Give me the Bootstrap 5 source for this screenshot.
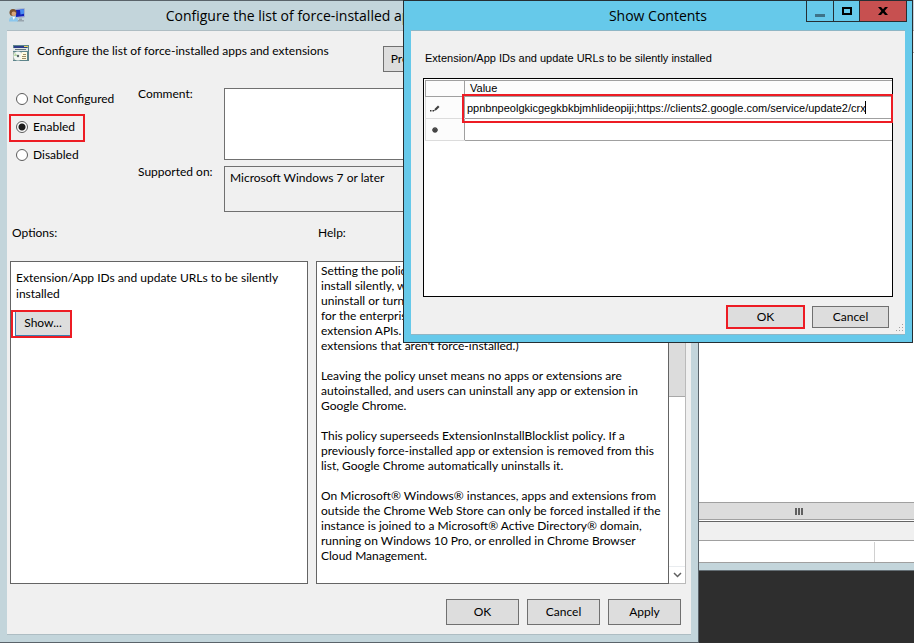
<!DOCTYPE html>
<html lang="en">
<head>
<meta charset="utf-8">
<meta name="viewport" content="width=device-width, initial-scale=1">
<title>Configure the list of force-installed apps and extensions</title>
<link href="https://cdn.jsdelivr.net/npm/bootstrap@5.3.0/dist/css/bootstrap.min.css" rel="stylesheet">
<style>
  :root { --frame: #c3d5db; --face: #f0f0f0; --edge: #707070; --mark: #ed1c24; }
  body { font-family: Lato, "Open Sans", sans-serif; font-size: 12px; line-height: 15px; color: #000; background: #2e2e2e; }
  .desktop { min-height: 100vh; }
  .policy-window { background: var(--frame); border: solid #5a636a; border-width: 1px 1px 1px 0; padding: 0 7px 7px; min-width: 0; }
  .caption { height: 29px; font-family: "Open Sans", sans-serif; font-size: 14px; line-height: 29px; }
  .policy-window .caption { padding-right: 4px; }
  .caption-icon { left: 2px; top: 7px; }
  .client { background: var(--face); border-top: 1px solid #aebdc3; border-bottom: 1px solid #aebdc3; }
  .policy-window .client { padding: 14px 5px 9px 3px; }
  .policy-head { height: 41px; padding-left: 3px; gap: 8px; }
  .policy-head .title-text { margin-top: -2px; }
  .policy-head .prev { width: 110px; margin-left: 46px; margin-top: 1px; padding-left: 7px; text-align: left; }
  .win-btn { --bs-btn-padding-x: 0; --bs-btn-padding-y: 0; --bs-btn-font-size: 12px; --bs-btn-line-height: 15px; --bs-btn-border-radius: 0; --bs-btn-bg: #dddddd; --bs-btn-color: #000; --bs-btn-border-color: #707070; --bs-btn-hover-bg: #e5f1fb; --bs-btn-hover-color: #000; --bs-btn-hover-border-color: #3c7fb1; width: 73px; height: 26px; padding-bottom: 2px; }
  .settings-grid { display: grid; grid-template-columns: 122px 86px 1fr; padding-left: 6px; height: 139px; }
  .choice { height: 28px; margin-left: -7px; padding: 3px 0 6px 7px; gap: 5px; }
  .choice input { appearance: none; width: 12px; height: 12px; margin: 0; border: 1px solid #5c5c5c; border-radius: 50%; background: #fff; }
  .choice input:checked { background: radial-gradient(circle, #1c1c1c 0 3px, #fff 4px); }
  .choice.marked { width: 76px; outline: 2px solid var(--mark); outline-offset: -2px; }
  .field-labels { gap: 63px; }
  .fields { padding-top: 2px; gap: 6px; }
  .field-box { border: 1px solid var(--edge); border-radius: 0; resize: none; padding: 3px 5px; }
  .comment-box { height: 72px; background: #fff; }
  .support-box { height: 46px; background: var(--face); }
  .panels { display: grid; grid-template-columns: 298fr 370fr; column-gap: 8px; row-gap: 21px; }
  .panel-name { padding-left: 2px; }
  .options-panel { background: #fff; border: 1px solid #646464; padding: 8px 5px; line-height: 16px; }
  .show-mark { width: 61px; height: 28px; margin: 8px 0 0 -5px; border: 2px solid var(--mark); padding-left: 2px; background: #fff; }
  .show-mark .win-btn { width: 100%; height: 100%; --bs-btn-border-color: #3c7fb1; border-width: 0 0 1px 1px; }
  .help-text { background: #fff; border: 1px solid #646464; padding: 1px 4px 18px; white-space: pre-line; height: 323px; overflow: hidden; }
  .track { width: 17px; border: solid #bababa; border-width: 1px 1px 1px 0; background: #fff; }
  .thumb { height: 118px; background: #dcdcdc; border-bottom: 1px solid #a8a8a8; }
  .arrow { height: 17px; line-height: 0; }
  .dialog-footer { gap: 8px; padding: 15px 5px 0 0; }
  /* console window behind the editor */
  .console { width: 215px; }
  .console-title { height: 31px; background: #c9d3de; border-bottom: 1px solid #aaa; }
  .console-menu { height: 22px; background: var(--face); border-bottom: 1px solid #aaa; }
  .console-scroll { height: 18px; background: #dcdcdc; border: solid #a0a0a0; border-width: 1px 0; gap: 1px; }
  .console-scroll i { width: 2px; height: 7px; background: #606060; }
  .console-tabs { height: 20px; margin-top: 1px; background: var(--face); border: solid #a0a0a0; border-width: 1px 0; border-top-color: #646464; }
  .console-status { height: 22px; border-bottom: 1px solid #a0a0a0; background: #fff; }
  .console-status i { width: 1px; height: 20px; margin: 1px 39px 0 auto; background: #d0d0d0; }
  .console-edge { height: 8px; background: var(--frame); border-bottom: 1px solid #646e74; }
  .wallpaper { height: 72px; background: #2e2e2e; }
  /* dialog on top */
  .contents-window { left: 403px; right: 1px; top: 0; background: #66c9ea; border: 1px solid #252e33; padding: 0 7px 7px; z-index: 5; }
  .contents-window .client { padding: 19px 12px 6px; border-color: #8fb6c5; font-family: "Liberation Sans", sans-serif; font-size: 11px; line-height: 16px; }
  .window-tools { right: -2px; top: 0; height: 21px; border: solid #252e33; border-width: 0 1px 1px; }
  .window-tools button { width: 27px; padding: 0; border: 0; border-right: 1px solid #252e33; background: transparent; line-height: 0; }
  .window-tools .max-tool { width: 26px; }
  .window-tools .close-tool { width: 46px; background: #c75050; border-right: 0; }
  .sheet-label { padding-left: 2px; }
  .value-sheet { height: 219px; margin-top: 12px; border: 1px solid #000; background: #fff; padding: 1px 0 0 1px; }
  .value-sheet table { width: 100%; table-layout: fixed; border-collapse: collapse; }
  .value-sheet th, .value-sheet td { border: 1px solid #a0a0a0; padding: 0; font-weight: 400; height: 22px; }
  .value-sheet tr > :last-child { border-right: 0; }
  .value-sheet thead th { height: 16px; line-height: 15px; padding-left: 5px; background: #fcfcfc; }
  .value-sheet tbody th { background: #fcfcfc; border-color: #dcdcdc #a0a0a0 #dcdcdc #dcdcdc; line-height: 0; padding-left: 3px; }
  .value-sheet col:first-child { width: 39px; }
  .cell-input { width: 398px; border: 0; padding: 0 0 0 2px; height: 18px; background: transparent; outline: 0; }
  .cell-input.active { width: 400px; }
  .caret { width: 1px; height: 13px; background: #000; }
  .cell-mark { inset: -3px -1px -5px -3px; border: 2px solid var(--mark); z-index: 2; }
  .contents-footer { margin-top: 9px; gap: 8px; padding-right: 4px; }
  .contents-footer .win-btn { width: 77px; height: 22px; font-family: Lato, sans-serif; }
  .contents-footer .marked { outline: 2px solid var(--mark); outline-offset: -1px; }
  .grip { right: 1px; bottom: 1px; }
</style>
<script src="https://cdn.jsdelivr.net/npm/bootstrap@5.3.0/dist/js/bootstrap.bundle.min.js"></script>
</head>
<body>
<div class="desktop d-flex position-relative overflow-hidden">
  <main class="policy-window flex-grow-1 d-flex flex-column">
    <header class="caption position-relative text-center text-nowrap">
      <svg class="caption-icon position-absolute" width="17" height="16" viewBox="0 0 17 16" aria-hidden="true">
        <path d="M5.500 1.500l10-1v8.500l-9 1z" fill="#d7e1ed" stroke="#a3b1ca"/><path d="M6.500 2l8.500-.8v7l-8 .9z" fill="#1624b8"/><path d="M11 1.600l4-.4v4.500l-3.500.8z" fill="#4a8cf0"/>
        <path d="M10 10.500h3v1.500h2v1.500H8V12h2z" fill="#98a4ad"/>
        <circle cx="4" cy="4.500" r="3.500" fill="#7c5230"/><circle cx="4.800" cy="5.800" r="2.300" fill="#d9a77c"/>
        <path d="M0 13.500c0-4 2-5 4.500-5S9 9.500 9 13.500z" fill="#8cc7ed"/><path d="M3.500 9l1.300 3L6 9z" fill="#fff"/>
      </svg>
      Configure the list of force-installed apps and extensions
    </header>
    <div class="client flex-grow-1 d-flex flex-column">
      <div class="policy-head d-flex align-items-start">
        <svg width="16" height="16" viewBox="0 0 16 16" aria-hidden="true">
          <path d="M0 0h16v16H0z" fill="#5d858b"/><path d="M1 1h13v2H1z" fill="#2b3c87"/><path d="M11 1h4v1h-4z" fill="#e9d35b"/><path d="M0 3h15v3H0z" fill="#dfe5e5"/><path d="M2 4h11v1H2z" fill="#65757b"/><path d="M0 7h14v8H0z" fill="#a3b1aa"/>
          <circle cx="5" cy="11" r="4.500" fill="#f3f6f2"/><path d="M5 11L2 8 1 11z" fill="#b8d9a4"/><circle cx="5" cy="11" r="1.200" fill="#58676a"/>
          <path d="M9 7h5v8H8V9z" fill="#fffbe0"/><path d="M10 9.500h3M9 11.500h4M9 13.500h4" stroke="#9a8c66"/>
        </svg>
        <span class="title-text text-nowrap">Configure the list of force-installed apps and extensions</span>
        <button type="button" class="btn win-btn prev">Previous Setting</button>
      </div>
      <div class="settings-grid">
        <div>
          <div class="choice d-flex align-items-center"><input type="radio" name="state" id="notConfigured"><label for="notConfigured">Not Configured</label></div>
          <div class="choice marked d-flex align-items-center"><input type="radio" name="state" id="enabled" checked><label for="enabled">Enabled</label></div>
          <div class="choice d-flex align-items-center"><input type="radio" name="state" id="disabled"><label for="disabled">Disabled</label></div>
        </div>
        <div class="field-labels d-flex flex-column">
          <label for="comment">Comment:</label>
          <label for="support">Supported on:</label>
        </div>
        <div class="fields d-flex flex-column">
          <textarea id="comment" class="field-box comment-box w-100"></textarea>
          <textarea id="support" class="field-box support-box w-100 overflow-hidden" readonly>Microsoft Windows 7 or later</textarea>
        </div>
      </div>
      <div class="panels">
        <div class="panel-name">Options:</div>
        <div class="panel-name">Help:</div>
        <section class="options-panel">
          <div>Extension/App IDs and update URLs to be silently<br>installed</div>
          <div class="show-mark"><button type="button" class="btn win-btn">Show...</button></div>
        </section>
        <section class="d-flex">
          <div class="help-text flex-grow-1">Setting the policy specifies a list of apps and extensions that
install silently, without user interaction, and which users can't
uninstall or turn off. Permissions are granted implicitly, including
for the enterprise.deviceAttributes and enterprise.platformKeys
extension APIs. (These 2 APIs aren't available to apps and
extensions that aren't force-installed.)

Leaving the policy unset means no apps or extensions are
autoinstalled, and users can uninstall any app or extension in
Google Chrome.

This policy superseeds ExtensionInstallBlocklist policy. If a
previously force-installed app or extension is removed from this
list, Google Chrome automatically uninstalls it.

On Microsoft® Windows® instances, apps and extensions from
outside the Chrome Web Store can only be forced installed if the
instance is joined to a Microsoft® Active Directory® domain,
running on Windows 10 Pro, or enrolled in Chrome Browser
Cloud Management.</div>
          <div class="track d-flex flex-column flex-shrink-0">
            <div class="arrow"></div><div class="thumb"></div>
            <div class="arrow mt-auto border-top border-secondary-subtle d-flex align-items-center justify-content-center">
              <svg width="9" height="6" viewBox="0 0 9 6" aria-hidden="true"><path d="M1 1l3.500 3.500L8 1" fill="none" stroke="#606060" stroke-width="1.500"/></svg>
            </div>
          </div>
        </section>
      </div>
      <footer class="dialog-footer d-flex justify-content-end">
        <button type="button" class="btn win-btn">OK</button>
        <button type="button" class="btn win-btn">Cancel</button>
        <button type="button" class="btn win-btn">Apply</button>
      </footer>
    </div>
  </main>

  <aside class="console d-flex flex-column flex-shrink-0">
    <div class="console-title"></div>
    <div class="console-menu"></div>
    <div class="flex-grow-1 bg-white"></div>
    <div class="console-scroll d-flex align-items-center justify-content-center pe-3"><i></i><i></i><i></i></div>
    <div class="bg-white"><div class="console-tabs"></div></div>
    <div class="console-status d-flex"><i></i></div>
    <div class="console-edge"></div>
    <div class="wallpaper"></div>
  </aside>

  <section class="contents-window position-absolute" role="dialog" aria-label="Show Contents">
    <header class="caption position-relative text-center">
      Show Contents
      <div class="window-tools position-absolute d-flex">
        <button type="button" aria-label="Minimize"><svg width="10" height="12" aria-hidden="true"><path d="M0 9h10v3H0z" fill="#3e7388"/></svg></button>
        <button type="button" class="max-tool" aria-label="Maximize"><svg width="10" height="8" aria-hidden="true"><path d="M1 1h8v6H1z" fill="none" stroke="#000" stroke-width="2"/></svg></button>
        <button type="button" class="close-tool" aria-label="Close"><svg width="10" height="8" viewBox="0 0 10 8" aria-hidden="true"><path d="M0 0h3l2 2.300L7 0h3L6.600 4 10 8H7L5 5.700 3 8H0l3.400-4z" fill="#000"/></svg></button>
      </div>
    </header>
    <div class="client position-relative">
      <div class="sheet-label">Extension/App IDs and update URLs to be silently installed</div>
      <div class="value-sheet">
        <table>
          <colgroup><col><col></colgroup>
          <thead><tr><th></th><th scope="col">Value</th></tr></thead>
          <tbody>
            <tr>
              <th scope="row"><svg width="14" height="9" viewBox="0 0 14 9" aria-label="Editing"><path d="M1 7h1.500v1.500H1zM3.500 7H5v1.500H3.500z" fill="#333"/><path d="M5 8l1-2.500L9 2.500 10.500 4 7.500 7z" fill="#404040"/></svg></th>
              <td class="position-relative"><div class="d-flex align-items-center"><input class="cell-input active" aria-label="Value 1" value="ppnbnpeolgkicgegkbkbjmhlideopiji;https://clients2.google.com/service/update2/crx"><span class="caret"></span></div><div class="cell-mark position-absolute pe-none"></div></td>
            </tr>
            <tr>
              <th scope="row"><svg width="14" height="8" viewBox="0 0 14 8" aria-label="New row"><path d="M6 1v6M3 4h6M4 2l4 4M8 2L4 6" stroke="#444" stroke-width="1.300"/></svg></th>
              <td><input class="cell-input" aria-label="Value 2"></td>
            </tr>
          </tbody>
        </table>
      </div>
      <footer class="contents-footer d-flex justify-content-end">
        <button type="button" class="btn win-btn marked">OK</button>
        <button type="button" class="btn win-btn">Cancel</button>
      </footer>
      <svg class="grip position-absolute" width="9" height="9" viewBox="0 0 9 9" aria-hidden="true"><path d="M7 0h1v1H7zM4 3h1v1H4zM7 3h1v1H7zM1 6h1v1H1zM4 6h1v1H4zM7 6h1v1H7z" fill="#a0a0a0"/></svg>
    </div>
  </section>
</div>
</body>
</html>
